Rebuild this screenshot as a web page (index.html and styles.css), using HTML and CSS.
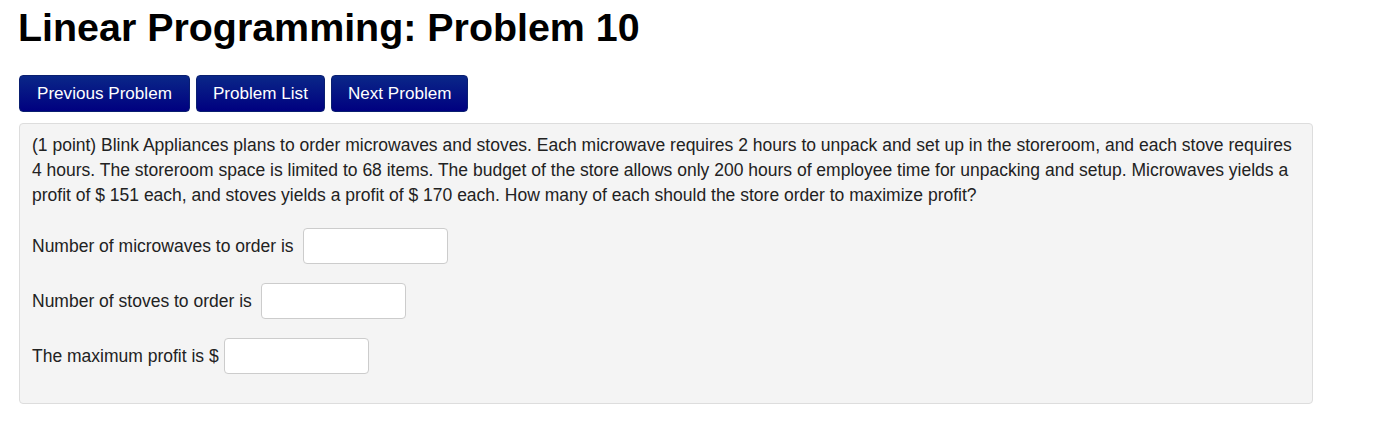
FILE: index.html
```html
<!DOCTYPE html>
<html>
<head>
<meta charset="utf-8">
<link rel="stylesheet" href="styles.css">
</head>
<body>
<div class="page">
  <h1 class="title">Linear Programming: Problem 10</h1>
  <div class="nav">
    <a class="btn">Previous Problem</a>
    <a class="btn">Problem List</a>
    <a class="btn">Next Problem</a>
  </div>
  <div class="problem">
    <p class="statement">(1 point) Blink Appliances plans to order microwaves and stoves. Each microwave requires 2 hours to unpack and set up in the storeroom, and each stove requires 4 hours. The storeroom space is limited to 68 items. The budget of the store allows only 200 hours of employee time for unpacking and setup. Microwaves yields a profit of $ 151 each, and stoves yields a profit of $ 170 each. How many of each should the store order to maximize profit?</p>
    <div class="answer"><span>Number of microwaves to order is</span><input class="field" type="text"></div>
    <div class="answer"><span>Number of stoves to order is</span><input class="field" type="text"></div>
    <div class="answer tight"><span>The maximum profit is $</span><input class="field" type="text"></div>
  </div>
</div>
</body>
</html>
```
FILE: styles.css
```css
html, body {
  margin: 0;
  padding: 0;
  background: #ffffff;
}
body {
  font-family: "Liberation Sans", Arial, sans-serif;
  font-size: 17.5px;
  color: #222;
}
.page {
  padding: 0 0 0 19px;
  width: 1294px;
}
.title {
  font-size: 39.4px;
  font-weight: bold;
  color: #000;
  margin: 5px 0 0 -1px;
  line-height: 1.15;
}
.nav {
  display: flex;
  gap: 6px;
  margin-top: 25px;
}
.btn {
  display: block;
  height: 37px;
  padding: 0 16px;
  color: #fff;
  font-size: 17.1px;
  border-radius: 4px;
  background: linear-gradient(#0a2788, #000080);
  box-sizing: border-box;
  border: 1px solid #0a1f70;
  line-height: 35px;
}
.btn:first-child {
  padding: 0 17px;
}
.problem {
  margin-top: 11px;
  background: #f4f4f4;
  border: 1px solid #ddd;
  border-radius: 4px;
  padding: 9px 12px 29px 12px;
}
.statement {
  margin: 0;
  line-height: 25px;
  color: #222;
}
.answer {
  display: flex;
  align-items: center;
  gap: 9px;
  margin-top: 19px;
  line-height: 25px;
}
.statement + .answer {
  margin-top: 20px;
}
.answer.tight {
  gap: 5px;
}
.field {
  width: 145px;
  height: 36px;
  box-sizing: border-box;
  border: 1px solid #ccc;
  border-radius: 4px;
  background: #fff;
  margin: 0;
  padding: 4px 8px;
  font-family: inherit;
  font-size: 17.5px;
}
```
